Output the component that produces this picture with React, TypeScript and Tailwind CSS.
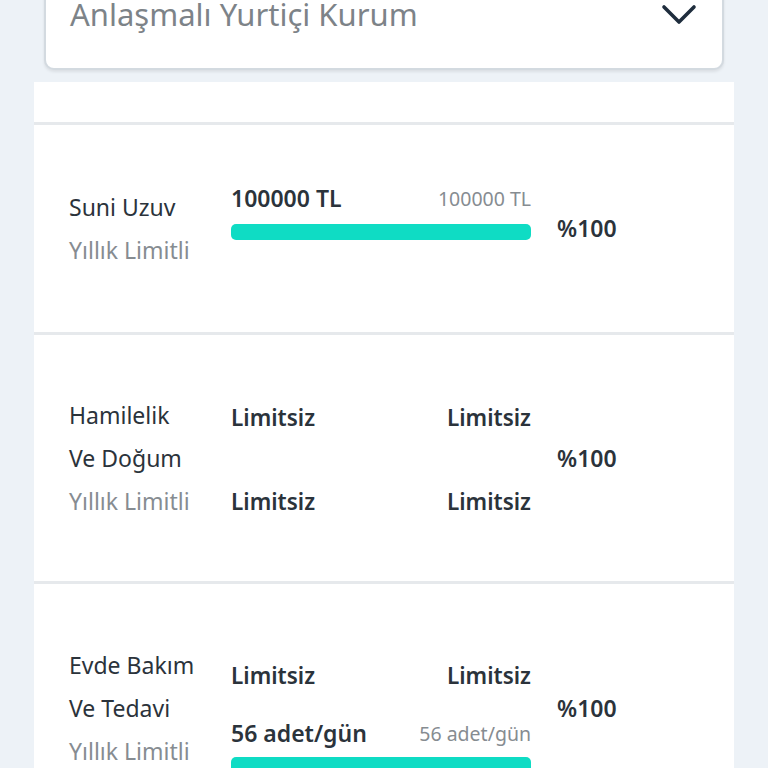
const font = { fontFamily: '"Noto Sans", "Open Sans", sans-serif' };

function Bar() {
  return <div className="h-4 w-full rounded-[5px] bg-[#0fdcc4]" />;
}

function Name({ lines }: { lines: string[] }) {
  return (
    <div className="w-[162px] shrink-0">
      {lines.map((l) => (
        <p key={l} className="text-[23px] leading-[43px] text-[#2b333b]">
          {l}
        </p>
      ))}
      <p className="text-[23px] leading-[43px] text-[#868c91]">Yıllık Limitli</p>
    </div>
  );
}

function Percent() {
  return <p className="ml-[26px] text-[23px] font-semibold text-[#2b333b]">%100</p>;
}

function Row({ left, right }: { left: string; right: string }) {
  return (
    <div className="flex items-center justify-between">
      <span className="text-[22.5px] font-semibold leading-[42px] text-[#2b333b]">{left}</span>
      <span className="text-[22.5px] font-semibold leading-[42px] text-[#2b333b]">{right}</span>
    </div>
  );
}

function AmountRow({ used, total }: { used: string; total: string }) {
  return (
    <div className="flex items-end justify-between">
      <span className="text-[23px] font-semibold leading-[26px] text-[#2b333b]">{used}</span>
      <span className="text-[19.5px] leading-[24px] text-[#868c91]">{total}</span>
    </div>
  );
}

export default function App() {
  return (
    <div className="h-[768px] overflow-hidden bg-[#edf2f7]" style={font}>
      <div className="mx-[44px] -mt-[20px] flex h-[90px] items-start justify-between rounded-b-[10px] border-2 border-t-0 border-[#d3dae0] bg-white pl-[24px] pr-[25px] pt-[12px] shadow-[0_2px_3px_rgba(0,0,0,0.08)]">
        <span className="text-[31px] leading-[44px] text-[#7d8388]">Anlaşmalı Yurtiçi Kurum</span>
        <svg width="36" height="24" viewBox="0 0 36 24" className="mt-[12px]" fill="none">
          <polyline
            points="3,3 18,18 33,3"
            stroke="#1f2d3d"
            strokeWidth="3.6"
            strokeLinecap="round"
            strokeLinejoin="round"
          />
        </svg>
      </div>

      <div className="mx-[34px] mt-[12px] bg-white">
        <div className="h-[43px] border-b-[3px] border-[#e6e9ec]" />

        <div className="flex h-[210px] items-center border-b-[3px] border-[#e6e9ec] pl-[35px]">
          <Name lines={['Suni Uzuv']} />
          <div className="w-[300px] pb-[32px]">
            <AmountRow used="100000 TL" total="100000 TL" />
            <div className="mt-[13px]">
              <Bar />
            </div>
          </div>
          <Percent />
        </div>

        <div className="flex h-[249px] items-center border-b-[3px] border-[#e6e9ec] pl-[35px]">
          <Name lines={['Hamilelik', 'Ve Doğum']} />
          <div className="w-[300px] pt-[4px]">
            <Row left="Limitsiz" right="Limitsiz" />
            <div className="h-[42px]" />
            <Row left="Limitsiz" right="Limitsiz" />
          </div>
          <Percent />
        </div>

        <div className="flex h-[248px] items-center pl-[35px]">
          <Name lines={['Evde Bakım', 'Ve Tedavi']} />
          <div className="w-[300px] pt-[12px]">
            <Row left="Limitsiz" right="Limitsiz" />
            <div className="mt-[23px]">
              <AmountRow used="56 adet/gün" total="56 adet/gün" />
            </div>
            <div className="mt-[11px]">
              <Bar />
            </div>
          </div>
          <Percent />
        </div>
      </div>
    </div>
  );
}
